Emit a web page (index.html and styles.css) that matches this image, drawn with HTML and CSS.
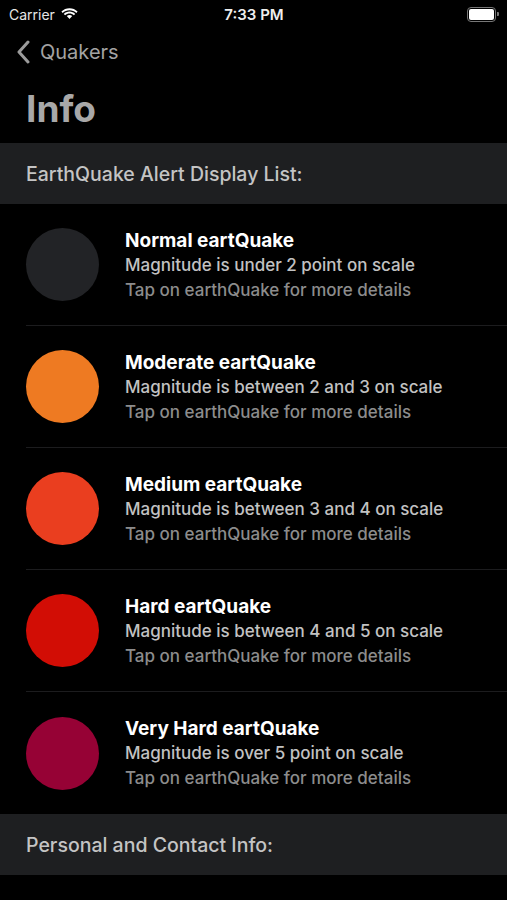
FILE: index.html
```html
<!DOCTYPE html>
<html lang="en">
<head>
    <meta charset="UTF-8">
    <meta name="viewport" content="width=device-width, initial-scale=1.0">
    <title>Info</title>
    <link rel="stylesheet" href="styles.css">
</head>
<body>
    <div class="status-bar">
        <div class="carrier">
            Carrier
            <svg class="wifi" width="17" height="12" viewBox="0 0 17 12">
                <path d="M8.5 2.2c2.6 0 5 1 6.8 2.7l1.3-1.4C14.4 1.4 11.6.2 8.5.2S2.6 1.4.4 3.5l1.3 1.4C3.5 3.2 5.9 2.2 8.5 2.2z" fill="#fff"/>
                <path d="M8.5 5.6c1.7 0 3.2.6 4.4 1.7l1.3-1.4C12.7 4.5 10.7 3.6 8.5 3.6S4.3 4.5 2.8 5.9l1.3 1.4c1.2-1.1 2.7-1.7 4.4-1.7z" fill="#fff"/>
                <path d="M8.5 7c-1 0-2 .4-2.7 1.1L8.5 11l2.7-2.9C10.5 7.4 9.5 7 8.5 7z" fill="#fff"/>
            </svg>
        </div>
        <div class="time">7:33 PM</div>
        <div class="battery">
            <span class="battery-body"><span class="battery-level"></span></span>
            <span class="battery-cap"></span>
        </div>
    </div>

    <div class="nav">
        <svg class="chevron" width="14" height="24" viewBox="0 0 14 24">
            <path d="M12 2L3 12l9 10" stroke="#9b9b9b" stroke-width="3" fill="none" stroke-linecap="round" stroke-linejoin="round"/>
        </svg>
        <span class="back-label">Quakers</span>
    </div>

    <h1 class="page-title">Info</h1>

    <div class="section-header">EarthQuake Alert Display List:</div>

    <ul class="alert-list">
        <li class="alert-row">
            <span class="dot dot-normal"></span>
            <div class="alert-text">
                <div class="alert-title">Normal eartQuake</div>
                <div class="alert-sub">Magnitude is under 2 point on scale</div>
                <div class="alert-hint">Tap on earthQuake for more details</div>
            </div>
        </li>
        <li class="alert-row">
            <span class="dot dot-moderate"></span>
            <div class="alert-text">
                <div class="alert-title">Moderate eartQuake</div>
                <div class="alert-sub">Magnitude is between 2 and 3 on scale</div>
                <div class="alert-hint">Tap on earthQuake for more details</div>
            </div>
        </li>
        <li class="alert-row">
            <span class="dot dot-medium"></span>
            <div class="alert-text">
                <div class="alert-title">Medium eartQuake</div>
                <div class="alert-sub">Magnitude is between 3 and 4 on scale</div>
                <div class="alert-hint">Tap on earthQuake for more details</div>
            </div>
        </li>
        <li class="alert-row">
            <span class="dot dot-hard"></span>
            <div class="alert-text">
                <div class="alert-title">Hard eartQuake</div>
                <div class="alert-sub">Magnitude is between 4 and 5 on scale</div>
                <div class="alert-hint">Tap on earthQuake for more details</div>
            </div>
        </li>
        <li class="alert-row">
            <span class="dot dot-very-hard"></span>
            <div class="alert-text">
                <div class="alert-title">Very Hard eartQuake</div>
                <div class="alert-sub">Magnitude is over 5 point on scale</div>
                <div class="alert-hint">Tap on earthQuake for more details</div>
            </div>
        </li>
    </ul>

    <div class="section-header">Personal and Contact Info:</div>
</body>
</html>
```

FILE: styles.css
```css
body {
    margin: 0;
    background: #000;
    color: #fff;
    font-family: Inter, "Noto Sans", sans-serif;
    width: 507px;
    height: 900px;
    overflow: hidden;
}
.status-bar {
    height: 28px;
    display: flex;
    align-items: center;
    justify-content: space-between;
    padding: 0 8px 0 9px;
}
.carrier {
    flex: 1;
    display: flex;
    align-items: center;
    gap: 6px;
    font-size: 14px;
    color: #e6e6e6;
}
.time {
    font-size: 15px;
    font-weight: 600;
    color: #eee;
}
.battery {
    flex: 1;
    display: flex;
    justify-content: flex-end;
    align-items: center;
}
.battery-body {
    width: 25px;
    height: 11px;
    border: 1px solid #777;
    border-radius: 4px;
    padding: 1px;
    display: flex;
}
.battery-level {
    flex: 1;
    background: #fff;
    border-radius: 2px;
}
.battery-cap {
    width: 2px;
    height: 4px;
    background: #777;
    border-radius: 0 1px 1px 0;
    margin-left: 1px;
}
.nav {
    height: 48px;
    display: flex;
    align-items: center;
    padding-left: 16px;
    gap: 10px;
}
.back-label {
    font-size: 20px;
    color: #a3a3a3;
}
.page-title {
    margin: 0;
    padding: 11px 26px 0;
    height: 67px;
    box-sizing: border-box;
    font-size: 37px;
    font-weight: 700;
    color: #a8a8a8;
    line-height: 44px;
}
.section-header {
    height: 61px;
    background: #1e1f21;
    display: flex;
    align-items: center;
    padding-left: 26px;
    font-size: 19.5px;
    font-weight: 500;
    color: #c4c4c4;
}
.alert-list {
    list-style: none;
    margin: 0;
    padding: 0 0 0 26px;
}
.alert-row {
    height: 122px;
    display: flex;
    align-items: center;
    gap: 26px;
    border-bottom: 1px solid #1c1c1e;
    box-sizing: border-box;
}
.alert-row:last-child {
    border-bottom: none;
}
.dot {
    width: 73px;
    height: 73px;
    border-radius: 50%;
    flex-shrink: 0;
}
.dot-normal { background: #222326; }
.dot-moderate { background: #ee7a22; }
.dot-medium { background: #ea3e1f; }
.dot-hard { background: #d20d05; }
.dot-very-hard { background: #960235; }
.alert-text {
    line-height: 25px;
    padding-top: 1px;
}
.alert-title {
    font-size: 19px;
    font-weight: 700;
    color: #fff;
}
.alert-sub {
    font-size: 17px;
    font-weight: 500;
    color: #c2c2c2;
}
.alert-hint {
    font-size: 17px;
    font-weight: 500;
    color: #8c8c8c;
}
```
